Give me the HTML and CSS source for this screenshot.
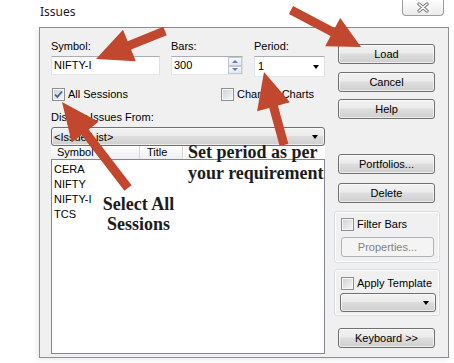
FILE: index.html
```html
<!DOCTYPE html>
<html>

<head>
    <title>Issues</title>
    <link rel="stylesheet" href="styles.css">
</head>

<body>
    <div class="screen">
        <div class="window">
            <div class="titlebar">
                <span class="title">Issues</span>
                <div class="close">
                    <svg width="14" height="11" viewBox="0 0 14 11">
                        <path d="M3 2 L11 9 M11 2 L3 9" stroke="#7d7d7d" stroke-width="3.4" stroke-linecap="round" fill="none" />
                        <path d="M3 2 L11 9 M11 2 L3 9" stroke="#ffffff" stroke-width="1.4" stroke-linecap="round" fill="none" />
                    </svg>
                </div>
            </div>

            <div class="dialog">
                <div class="main">
                    <div class="fields">
                        <div class="field f-symbol">
                            <label>Symbol:</label>
                            <div class="textbox">NIFTY-I</div>
                        </div>
                        <div class="field f-bars">
                            <label>Bars:</label>
                            <div class="textbox">300
                                <div class="spinner">
                                    <span class="spin-btn"><i class="tri-up"></i></span>
                                    <span class="spin-btn"><i class="tri-down"></i></span>
                                </div>
                            </div>
                        </div>
                        <div class="field f-period">
                            <label>Period:</label>
                            <div class="textbox period">1<i class="drop-arrow"></i></div>
                        </div>
                    </div>

                    <div class="checkrow">
                        <div class="check first">
                            <span class="box">
                                <svg width="11" height="11" viewBox="0 0 11 11">
                                    <path d="M2 5.5 L4.3 8 L9 2.5" stroke="#3b5ea8" stroke-width="1.8" fill="none" />
                                </svg>
                            </span>
                            All Sessions
                        </div>
                        <div class="check">
                            <span class="box"></span>
                            Chart All Charts
                        </div>
                    </div>

                    <div class="caption">Display Issues From:</div>
                    <div class="dropdown">&lt;Issue List&gt;<i class="drop-arrow"></i></div>

                    <div class="lv-header">
                        <div class="col c1">Symbol</div>
                        <div class="col c2">Title</div>
                    </div>
                    <div class="lv-body">
                        <div class="row">CERA</div>
                        <div class="row">NIFTY</div>
                        <div class="row">NIFTY-I</div>
                        <div class="row">TCS</div>
                    </div>
                </div>

                <div class="side">
                    <div class="btn">Load</div>
                    <div class="btn b-cancel">Cancel</div>
                    <div class="btn b-help">Help</div>
                    <div class="btn b-portfolios">Portfolios...</div>
                    <div class="btn b-delete">Delete</div>

                    <div class="group g-filter">
                        <div class="check"><span class="box"></span>Filter Bars</div>
                        <div class="btn disabled">Properties...</div>
                    </div>

                    <div class="group g-template">
                        <div class="check"><span class="box"></span>Apply Template</div>
                        <div class="dropdown small"><i class="drop-arrow"></i></div>
                    </div>

                    <div class="btn b-keyboard">Keyboard &gt;&gt;</div>
                </div>
            </div>
        </div>

        <!-- notes and arrows drawn over the dialog -->
        <div class="note note-period">Set period as per<br>your requirement</div>
        <div class="note note-sessions">Select All<br>Sessions</div>

        <svg class="arrows" width="454" height="363" viewBox="0 0 454 363">
            <polygon points="163.3,26.8 127.7,41.3 123,29.7 96,59 135.8,61.2 131.1,49.6 166.7,35.2" />
            <polygon points="288.9,14 330.6,36 325.2,46.2 361,47 340.2,17.9 334.8,28.1 293.1,6" />
            <polygon points="288.3,143.8 277.9,105.5 289.9,102.2 264,72 257.1,111.2 269.2,107.9 279.7,146.2" />
            <polygon points="131.6,185.3 88.7,129.4 98.6,121.8 62,102 71.7,142.5 81.6,134.9 124.4,190.7" />
        </svg>
    </div>
</body>

</html>
```

FILE: styles.css
```css
body {
    margin: 0;
    background-color: #ffffff;
    color: #000000;
    font-family: "Liberation Sans", Arial, sans-serif;
    font-size: 11px;
}

.screen {
    position: relative;
    width: 454px;
    height: 363px;
    overflow: hidden;
}

.window {
    margin-left: 39px;
    width: 410px;
}

.titlebar {
    height: 27px;
    display: flex;
    align-items: flex-start;
}

.title {
    font-family: "Noto Sans", sans-serif;
    font-size: 12px;
    line-height: 16px;
    padding: 4px 0 0 1px;
    color: #1b1b1b;
}

.close {
    margin-left: auto;
    margin-right: 5px;
    width: 42px;
    height: 16px;
    box-sizing: border-box;
    border: 1px solid #9c9c9c;
    border-top: none;
    border-radius: 0 0 4px 4px;
    background: linear-gradient(#fefefe, #ebebeb);
    display: flex;
    justify-content: center;
    align-items: center;
}

.dialog {
    box-sizing: border-box;
    height: 331px;
    border: 1px solid #8c8e94;
    background-color: #f0f0f0;
    display: flex;
    padding: 12px 0 0 11px;
    box-shadow: -2px 2px 5px rgba(0, 0, 0, 0.08);
}

/* left column */

.main {
    width: 274px;
}

.fields {
    display: flex;
    align-items: flex-start;
}

.field label {
    display: block;
    line-height: 13px;
    margin-bottom: 3px;
}

.f-symbol {
    width: 109px;
    margin-right: 11px;
}

.f-bars {
    width: 72px;
    margin-right: 11px;
}

.f-period {
    width: 71px;
}

.textbox {
    box-sizing: border-box;
    height: 19px;
    background-color: #ffffff;
    border: 1px solid;
    border-color: #abadb3 #dbdfe6 #e3e9ef #e2e3ea;
    padding-left: 2px;
    line-height: 17px;
    display: flex;
    align-items: center;
}

.textbox.period {
    height: 21px;
    padding-left: 3px;
}

.spinner {
    margin-left: auto;
    align-self: stretch;
    width: 14px;
    display: flex;
    flex-direction: column;
}

.spin-btn {
    flex: 1;
    border: 1px solid #c3c9d3;
    background: linear-gradient(#f8f9fb, #e4e8ee);
    display: flex;
    justify-content: center;
    align-items: center;
}

.tri-up {
    border-left: 3px solid transparent;
    border-right: 3px solid transparent;
    border-bottom: 3px solid #5d7fb6;
}

.tri-down {
    border-left: 3px solid transparent;
    border-right: 3px solid transparent;
    border-top: 3px solid #5d7fb6;
}

.drop-arrow {
    margin-left: auto;
    margin-right: 5px;
    border-left: 3.5px solid transparent;
    border-right: 3.5px solid transparent;
    border-top: 4px solid #000000;
}

.checkrow {
    display: flex;
    margin-top: 11px;
    padding-left: 1px;
    height: 13px;
}

.check {
    display: flex;
    align-items: center;
    gap: 3px;
    line-height: 13px;
}

.check.first {
    width: 169px;
}

.box {
    box-sizing: border-box;
    width: 13px;
    height: 13px;
    border: 1px solid #8e8f8f;
    background: linear-gradient(135deg, #cdd0d4, #f7f7f7);
    box-shadow: inset 0 0 0 1px #f6f6f6;
    display: flex;
    justify-content: center;
    align-items: center;
}

.caption {
    margin-top: 10px;
    margin-bottom: 3px;
    line-height: 13px;
}

.dropdown {
    box-sizing: border-box;
    height: 19px;
    border: 1px solid #707070;
    border-radius: 3px;
    background: linear-gradient(#f2f2f2 0%, #ebebeb 45%, #dddddd 50%, #cfcfcf 100%);
    box-shadow: inset 0 0 0 1px rgba(255, 255, 255, 0.6);
    display: flex;
    align-items: center;
    padding-left: 2px;
}

.dropdown .drop-arrow {
    margin-right: 6px;
}

.lv-header {
    display: flex;
    height: 13px;
    background-color: #ffffff;
}

.col {
    box-sizing: border-box;
    line-height: 13px;
    background: linear-gradient(#fdfdfd, #eeeff1);
    border-right: 1px solid #d5d5d5;
}

.c1 {
    width: 89px;
    padding-left: 6px;
}

.c2 {
    width: 43px;
    padding-left: 7px;
}

.lv-body {
    box-sizing: border-box;
    height: 195px;
    border: 1px solid #828790;
    background-color: #ffffff;
    padding: 2px 0 0 2px;
}

.row {
    line-height: 15px;
}

/* right column */

.side {
    width: 106px;
    margin-left: 9px;
    margin-top: 4px;
    display: flex;
    flex-direction: column;
    align-items: flex-start;
}

.btn {
    box-sizing: border-box;
    width: 97px;
    height: 20px;
    margin-left: 4px;
    border: 1px solid #707070;
    border-radius: 3px;
    background: linear-gradient(#f2f2f2 0%, #ebebeb 45%, #dddddd 50%, #cfcfcf 100%);
    box-shadow: inset 0 0 0 1px rgba(255, 255, 255, 0.6);
    display: flex;
    align-items: center;
    justify-content: center;
}

.b-cancel {
    margin-top: 8px;
}

.b-help {
    margin-top: 7px;
}

.b-portfolios {
    margin-top: 35px;
}

.b-delete {
    margin-top: 9px;
}

.b-keyboard {
    margin-top: 12px;
}

.btn.disabled {
    width: 93px;
    margin-left: 0;
    margin-top: 6px;
    border-color: #adb2b5;
    background: #f4f4f4;
    box-shadow: none;
    color: #838383;
}

.group {
    box-sizing: border-box;
    width: 106px;
    border: 1px solid #d5dfe5;
    border-radius: 3px;
    box-shadow: inset 0 0 0 1px #ffffff;
}

.g-filter {
    height: 52px;
    margin-top: 8px;
    padding: 6px 0 0 6px;
}

.g-template {
    height: 47px;
    margin-top: 6px;
    padding: 7px 0 0 5px;
}

.g-template .check {
    margin-left: 1px;
}

.dropdown.small {
    width: 96px;
    margin-top: 3px;
}

/* annotations */

.note {
    position: absolute;
    font-family: "Liberation Serif", "Times New Roman", serif;
    font-weight: bold;
    font-size: 18px;
    color: #1c1c1c;
}

.note-period {
    left: 188px;
    top: 142px;
    line-height: 21px;
}

.note-sessions {
    left: 98px;
    top: 194px;
    width: 81px;
    text-align: center;
    line-height: 20px;
}

.arrows {
    position: absolute;
    left: 0;
    top: 0;
    fill: #c1472f;
}
```
